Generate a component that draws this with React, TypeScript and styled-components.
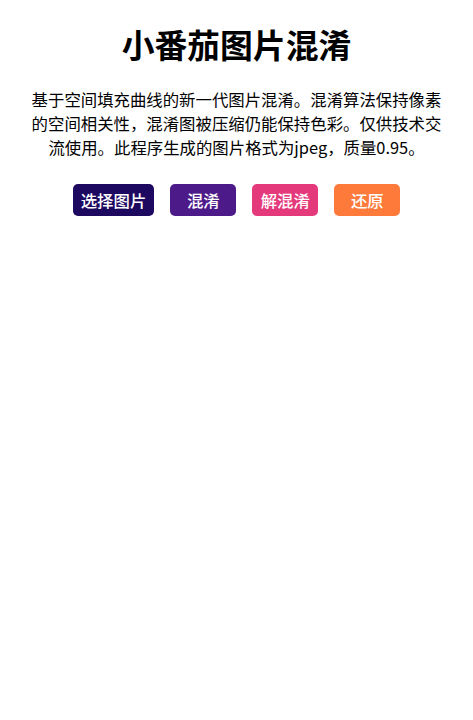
import React from "react";
import styled, { createGlobalStyle } from "styled-components";

const GlobalStyle = createGlobalStyle`
  html, body {
    margin: 0;
    padding: 0;
    background: #fff;
  }
  body {
    font-family: "Noto Sans CJK SC", "Noto Sans", sans-serif;
    color: #000;
  }
`;

type Action = { label: string; color: string };

const actions: Action[] = [
  { label: "选择图片", color: "#1e0961" },
  { label: "混淆", color: "#4d1b89" },
  { label: "解混淆", color: "#e4397b" },
  { label: "还原", color: "#fd7a3b" },
];

export default function App() {
  return (
    <Page>
      <GlobalStyle />
      <Title>小番茄图片混淆</Title>
      <Intro>
        基于空间填充曲线的新一代图片混淆。混淆算法保持像素的空间相关性，混淆图被压缩仍能保持色彩。仅供技术交流使用。此程序生成的图片格式为jpeg，质量0.95。
      </Intro>
      <Toolbar>
        {actions.map((a) => (
          <ActionButton key={a.label} $bg={a.color}>
            {a.label}
          </ActionButton>
        ))}
      </Toolbar>
    </Page>
  );
}

const Page = styled.div`
  display: flex;
  flex-direction: column;
  align-items: center;
  padding: 20px 24px 0;
`;

const Title = styled.h1`
  margin: 0;
  font-size: 32.8px;
  font-weight: bold;
  line-height: 48px;
`;

const Intro = styled.p`
  margin: 19px 0 0;
  width: 414px;
  text-align: center;
  font-size: 16.4px;
  line-height: 24.2px;
`;

const Toolbar = styled.div`
  display: flex;
  flex-direction: row;
  gap: 16px;
  margin-top: 24px;
`;

const ActionButton = styled.button<{ $bg: string }>`
  height: 32px;
  min-width: 66px;
  padding: 0 8px;
  border: none;
  border-radius: 5px;
  background-color: ${(p) => p.$bg};
  color: #fff;
  font-family: "Noto Sans CJK SC", sans-serif;
  font-size: 16.4px;
  font-weight: 500;
  cursor: pointer;
`;
